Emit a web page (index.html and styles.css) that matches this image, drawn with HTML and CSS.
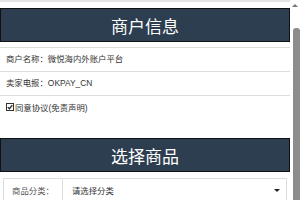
FILE: index.html
```html
<!DOCTYPE html>
<html>
<head>
    <title>商户信息</title>
    <link rel="stylesheet" href="styles.css">
</head>
<body>
<div class="window">
    <div class="page">
        <div class="prev-line"></div>

        <div class="title">商户信息</div>

        <ul class="info-list">
            <li>商户名称：微悦海内外账户平台</li>
            <li>卖家电报：OKPAY_CN</li>
        </ul>

        <label class="agree">
            <span class="check">
                <svg width="6" height="6" viewBox="0 0 6 6">
                    <path d="M0.8 3.1 L2.4 4.7 L5.3 1.2" fill="none" stroke="#222" stroke-width="1.3"/>
                </svg>
            </span>
            <span>同意协议(免责声明)</span>
        </label>

        <div class="title">选择商品</div>

        <div class="field">
            <span class="field-label">商品分类：</span>
            <span class="field-select">
                <span>请选择分类</span>
                <span class="caret"></span>
            </span>
        </div>
    </div>

    <div class="scrollbar">
        <div class="scroll-up"><span class="arrow-up"></span></div>
        <div class="scroll-thumb"></div>
    </div>
</div>
</body>
</html>
```

FILE: styles.css
```css
html, body {
    margin: 0;
    padding: 0;
}

body {
    font-family: "Liberation Sans", "Noto Sans CJK SC", sans-serif;
    color: #333333;
    background-color: #FFFFFF;
    overflow: hidden;
}

.window {
    display: flex;
    width: 300px;
    height: 200px;
    overflow: hidden;
}

.page {
    width: 290px;
    flex: none;
}

/* scrollbar on the right */
.scrollbar {
    width: 10px;
    display: flex;
    flex-direction: column;
    background-color: #FFFFFF;
}
.scroll-up {
    height: 28px;
    flex: none;
    display: flex;
    justify-content: center;
    padding-top: 4px;
    box-sizing: border-box;
}
.arrow-up {
    width: 0;
    height: 0;
    border-left: 3px solid transparent;
    border-right: 3px solid transparent;
    border-bottom: 3px solid #777777;
}
.scroll-thumb {
    flex: 1;
    margin-left: 3px;
    background-color: #8C8C8C;
    border-radius: 3px 3px 0 0;
}

.prev-line {
    height: 2px;
    background-color: #E4E4E4;
}

.title {
    margin-top: 6px;
    height: 34px;
    box-sizing: border-box;
    border: 1px solid #111111;
    background-color: #2C3E50;
    color: #FFFFFF;
    font-size: 17px;
    display: flex;
    align-items: center;
    justify-content: center;
}

.info-list {
    list-style: none;
    margin: 5px 0 0 0;
    padding: 0;
    border-top: 1px solid #DDDDDD;
}
.info-list li {
    height: 23px;
    line-height: 23px;
    padding-left: 6px;
    font-size: 8.4px;
    border-bottom: 1px solid #DDDDDD;
}

.agree {
    display: flex;
    align-items: center;
    height: 36px;
    box-sizing: border-box;
    padding: 0 6px 15px 6px;
    font-size: 8.4px;
}
.check {
    width: 8px;
    height: 8px;
    box-sizing: border-box;
    border: 1px solid #333333;
    display: flex;
    align-items: center;
    justify-content: center;
    margin-right: 1px;
}

.field {
    display: flex;
    margin: 6px 3px 6px 3px;
    height: 23px;
    box-sizing: border-box;
    border: 1px solid #DDDDDD;
    font-size: 8.4px;
}
.field-label {
    width: 58px;
    border-right: 1px solid #DDDDDD;
    color: #555555;
    display: flex;
    align-items: center;
    justify-content: center;
}
.field-select {
    flex: 1;
    display: flex;
    align-items: center;
    justify-content: space-between;
    padding: 0 6px 0 9px;
}
.caret {
    width: 0;
    height: 0;
    border-left: 3px solid transparent;
    border-right: 3px solid transparent;
    border-top: 3px solid #222222;
    margin-top: 1px;
}
```
